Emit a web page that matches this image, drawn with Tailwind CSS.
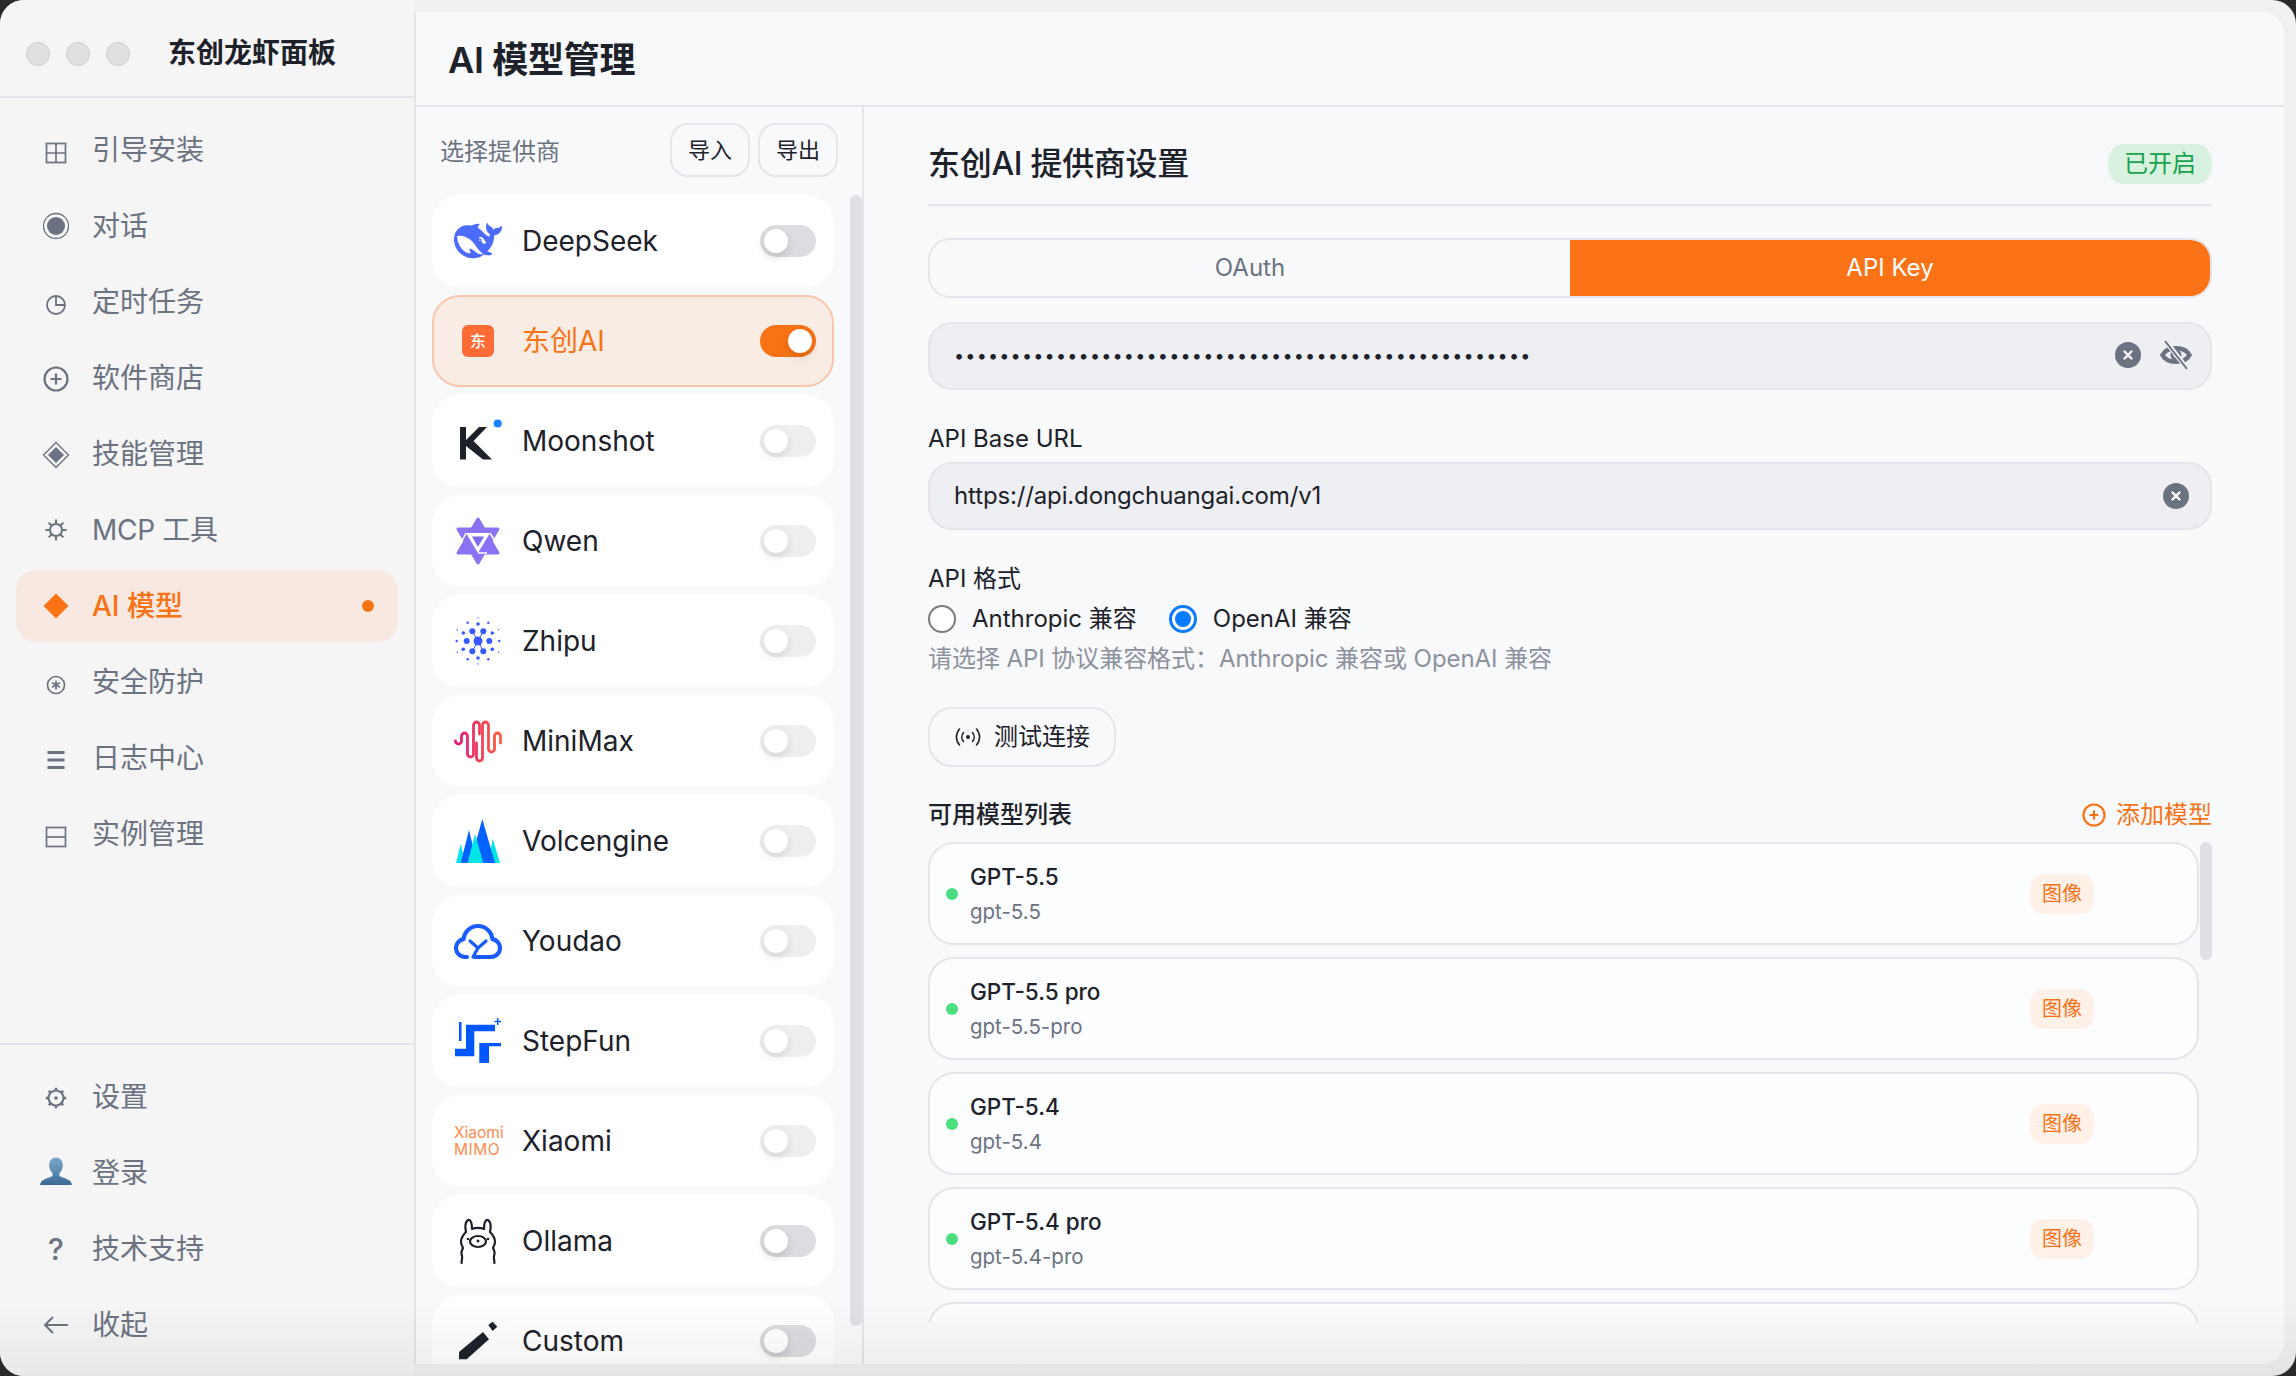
<!DOCTYPE html>
<html lang="zh-CN">
<head>
    <meta charset="UTF-8">
    <title>东创龙虾面板</title>
    <script src="https://cdn.jsdelivr.net/npm/@tailwindcss/browser@4"></script>
</head>
<body class="bg-[#2a2a2a] overflow-hidden font-['Inter','Noto_Sans_CJK_SC',sans-serif] text-[#1d2129]">
<div class="relative w-[2296px] h-[1376px] rounded-[24px] overflow-hidden bg-[#f0f0f1] flex">

    <!-- sidebar -->
    <aside class="w-[414px] h-full bg-[#f5f5f6] flex flex-col text-[28px] text-[#6b7280]">
        <div class="h-[98px] shrink-0 border-b-2 border-[#e4e4ea] flex items-center pl-[26px] pt-[12px]">
            <span class="w-6 h-6 rounded-full bg-[#e0e0e0] border border-[#cccccc]"></span>
            <span class="w-6 h-6 rounded-full bg-[#e0e0e0] border border-[#cccccc] ml-4"></span>
            <span class="w-6 h-6 rounded-full bg-[#e0e0e0] border border-[#cccccc] ml-4"></span>
            <span class="ml-[38px] text-[28px] font-semibold leading-8 text-[#1d2129] -mt-[2px]">东创龙虾面板</span>
        </div>
        <nav class="flex-1 pt-4 px-4 flex flex-col gap-1">
            <a class="h-[72px] rounded-[20px] flex items-center pl-6 gap-[20px]">
                <svg class="w-8 h-8 mt-[6px]" viewBox="0 0 32 32" fill="none" stroke="#6b7280" stroke-width="1.7"><rect x="6.500" y="6.500" width="19" height="19"/><path d="M16 6.500v19M6.500 16h19"/></svg>
                <span>引导安装</span>
            </a>
            <a class="h-[72px] rounded-[20px] flex items-center pl-6 gap-[20px]">
                <svg class="w-8 h-8" viewBox="0 0 32 32" fill="#6b7280" stroke="none"><circle cx="16" cy="16" r="12.500" fill="none" stroke="#6b7280" stroke-width="1.300"/><circle cx="16" cy="16" r="9"/></svg>
                <span>对话</span>
            </a>
            <a class="h-[72px] rounded-[20px] flex items-center pl-6 gap-[20px]">
                <svg class="w-8 h-8 mt-[6px]" viewBox="0 0 32 32" fill="none" stroke="#6b7280" stroke-width="1.800"><circle cx="16" cy="16" r="9"/><path d="M16 7v9h9"/></svg>
                <span>定时任务</span>
            </a>
            <a class="h-[72px] rounded-[20px] flex items-center pl-6 gap-[20px]">
                <svg class="w-8 h-8 mt-[2px]" viewBox="0 0 32 32" fill="none" stroke="#6b7280" stroke-width="2.200"><circle cx="16" cy="16" r="11.500"/><path d="M16 10.500v11M10.500 16h11"/></svg>
                <span>软件商店</span>
            </a>
            <a class="h-[72px] rounded-[20px] flex items-center pl-6 gap-[20px]">
                <svg class="w-8 h-8 mt-[2px]" viewBox="0 0 32 32"><path d="M16 3.500 28.500 16 16 28.500 3.500 16Z" fill="none" stroke="#6b7280" stroke-width="1.300"/><path d="M16 8 24 16 16 24 8 16Z" fill="#6b7280"/></svg>
                <span>技能管理</span>
            </a>
            <a class="h-[72px] rounded-[20px] flex items-center pl-6 gap-[20px]">
                <svg class="w-8 h-8" viewBox="0 0 32 32" fill="none" stroke="#6b7280" stroke-width="2"><circle cx="16" cy="16" r="6"/><path d="M16 5.500v4.500M16 22v4.500M5.500 16H10M22 16h4.500M8.600 8.600l3.200 3.200M20.200 20.200l3.200 3.200M23.400 8.600l-3.200 3.200M11.800 20.200l-3.200 3.200"/></svg>
                <span class="tracking-[-0.3px]">MCP 工具</span>
            </a>
            <a class="h-[72px] rounded-[20px] flex items-center pl-6 gap-[20px] bg-[#f7e9e2] text-[#f97316] font-medium">
                <svg class="w-8 h-8" viewBox="0 0 32 32" fill="#f97316"><path d="M16 3.500 28.500 16 16 28.500 3.500 16Z"/></svg>
                <span class="flex-1">AI 模型</span>
                <span class="w-3 h-3 rounded-full bg-[#f97316] mr-6"></span>
            </a>
            <a class="h-[72px] rounded-[20px] flex items-center pl-6 gap-[20px]">
                <svg class="w-8 h-8 mt-[6px]" viewBox="0 0 32 32" fill="none" stroke="#6b7280" stroke-width="1.700"><circle cx="16" cy="16" r="8.500"/><path d="M16 11.500v9M12.100 13.750l7.800 4.500M19.900 13.750l-7.800 4.500"/></svg>
                <span>安全防护</span>
            </a>
            <a class="h-[72px] rounded-[20px] flex items-center pl-6 gap-[20px]">
                <svg class="w-8 h-8 mt-[4px]" viewBox="0 0 32 32" fill="none" stroke="#6b7280" stroke-width="2.800"><path d="M7.500 8.500h17M7.500 16h17M7.500 23.500h17"/></svg>
                <span>日志中心</span>
            </a>
            <a class="h-[72px] rounded-[20px] flex items-center pl-6 gap-[20px]">
                <svg class="w-8 h-8 mt-[6px]" viewBox="0 0 32 32" fill="none" stroke="#6b7280" stroke-width="1.700"><rect x="6.500" y="6.500" width="19" height="19"/><path d="M6.500 16h19"/></svg>
                <span>实例管理</span>
            </a>
        </nav>
        <div class="shrink-0 border-t-2 border-[#e4e4ea] pt-4 pb-[15px] px-4 flex flex-col gap-1">
            <a class="h-[72px] rounded-[20px] flex items-center pl-6 gap-[20px]">
                <svg class="w-8 h-8 mt-[2px]" viewBox="0 0 32 32" fill="none" stroke="#6b7280"><circle cx="16" cy="16" r="7.500" stroke-width="2.200"/><circle cx="16" cy="16" r="1.800" fill="#6b7280" stroke="none"/><path stroke-width="2.600" d="M16 5.800v2.400M16 23.800v2.400M5.800 16h2.400M23.800 16h2.400M8.800 8.800l1.700 1.700M21.500 21.500l1.700 1.700M23.200 8.800l-1.700 1.700M10.500 21.500l-1.700 1.700"/></svg>
                <span>设置</span>
            </a>
            <a class="h-[72px] rounded-[20px] flex items-center pl-6 gap-[20px]">
                <svg class="w-8 h-8" viewBox="0 0 32 32"><defs><linearGradient id="personFill" x1="0" y1="0" x2="0" y2="1"><stop offset="0" stop-color="#7fa9cc"/><stop offset="1" stop-color="#3b6a96"/></linearGradient></defs><path d="M16 .5c4.200 0 6.800 3.400 6.800 7.700 0 3.200-1.300 6-3.300 7.600v2.700c0 1.300 6 2.500 9.700 4.700 1.700 1 2.500 2.600 2.600 4.800H.200c.1-2.200.9-3.800 2.600-4.800 3.700-2.200 9.700-3.400 9.700-4.700v-2.700c-2-1.600-3.300-4.400-3.300-7.600C9.200 3.900 11.800.5 16 .5Z" fill="url(#personFill)"/></svg>
                <span>登录</span>
            </a>
            <a class="h-[72px] rounded-[20px] flex items-center pl-6 gap-[20px]">
                <span class="w-8 text-center font-medium text-[30px] leading-8">?</span>
                <span>技术支持</span>
            </a>
            <a class="h-[72px] rounded-[20px] flex items-center pl-6 gap-[20px]">
                <svg class="w-8 h-8" viewBox="0 0 32 32" fill="none" stroke="#6b7280" stroke-width="2"><path d="M28 16H5M13 8l-8 8 8 8"/></svg>
                <span>收起</span>
            </a>
        </div>
    </aside>

    <!-- main panel -->
    <main class="flex-1 my-3 mr-3 flex flex-col bg-[#f8f9fb] border-l-2 border-[#e4e4ea] rounded-r-[22px] overflow-hidden">
        <header class="h-[95px] shrink-0 border-b-2 border-[#e4e4ea] flex items-center pl-8">
            <h1 class="text-[36px] font-semibold leading-10 tracking-[-0.3px] mt-[2px]">AI 模型管理</h1>
        </header>
        <div class="flex-1 flex min-h-0">

            <!-- provider column -->
            <section class="relative w-[448px] shrink-0 border-r-2 border-[#e4e4ea] flex flex-col">
                <div class="h-[88px] shrink-0 flex items-center pl-[24px] pr-[24px]">
                    <span class="flex-1 text-[24px] text-[#6b7280] mt-[2px]">选择提供商</span>
                    <button class="w-20 h-[54px] rounded-[18px] border-2 border-[#e4e4ea] text-[22px] mt-[-2px]">导入</button>
                    <button class="w-20 h-[54px] rounded-[18px] border-2 border-[#e4e4ea] text-[22px] ml-2 mt-[-2px]">导出</button>
                </div>
                <div class="flex-1 min-h-0 overflow-hidden pl-4 flex flex-col gap-2 text-[28px]">

                    <div class="w-[402px] h-[92px] shrink-0 rounded-[28px] bg-white flex items-center pl-[22px] pr-[18px]">
                        <svg class="w-12 h-12 shrink-0" viewBox="0 0 24 24" fill="#4d6bfe"><path d="M23.748 4.482c-.254-.124-.364.113-.512.234-.051.039-.094.09-.137.136-.372.397-.806.657-1.373.626-.829-.046-1.537.214-2.163.848-.133-.782-.575-1.248-1.247-1.548-.352-.156-.708-.311-.955-.65-.172-.241-.219-.51-.305-.774-.055-.16-.11-.323-.293-.35-.2-.031-.278.136-.356.276-.313.572-.434 1.202-.422 1.84.027 1.436.633 2.58 1.838 3.393.137.093.172.187.129.323-.082.28-.18.552-.266.833-.055.179-.137.217-.329.14a5.526 5.526 0 01-1.736-1.18c-.857-.828-1.631-1.742-2.597-2.458a11.365 11.365 0 00-.689-.471c-.985-.957.13-1.743.388-1.836.27-.098.093-.432-.779-.428-.872.004-1.67.295-2.687.684a3.055 3.055 0 01-.465.137 9.597 9.597 0 00-2.883-.102c-1.885.21-3.39 1.102-4.497 2.623C.082 8.606-.231 10.684.152 12.85c.403 2.284 1.569 4.175 3.36 5.653 1.858 1.533 3.997 2.284 6.438 2.14 1.482-.085 3.133-.284 4.994-1.86.47.234.962.327 1.78.397.63.059 1.236-.03 1.705-.128.735-.156.684-.837.419-.961-2.155-1.004-1.682-.595-2.113-.926 1.096-1.296 2.746-2.642 3.392-7.003.05-.347.007-.565 0-.845-.004-.17.035-.237.23-.256a4.173 4.173 0 001.545-.475c1.396-.763 1.96-2.015 2.093-3.517.02-.23-.004-.467-.247-.588zM11.581 18c-2.089-1.642-3.102-2.183-3.52-2.16-.392.024-.321.471-.235.763.09.288.207.486.371.739.114.167.192.416-.113.603-.673.416-1.842-.14-1.897-.167-1.361-.802-2.5-1.86-3.301-3.307-.774-1.393-1.224-2.887-1.298-4.482-.02-.386.093-.522.477-.592a4.696 4.696 0 011.529-.039c2.132.312 3.946 1.265 5.468 2.774.868.86 1.525 1.887 2.202 2.891.72 1.066 1.494 2.082 2.48 2.914.348.292.625.514.891.677-.802.09-2.14.11-3.054-.614zm1-6.44a.306.306 0 01.415-.287.302.302 0 01.2.288.306.306 0 01-.31.307.303.303 0 01-.304-.308zm3.11 1.596c-.2.081-.399.151-.59.16a1.245 1.245 0 01-.798-.254c-.274-.23-.47-.358-.552-.758a1.73 1.73 0 01.016-.588c.07-.327-.008-.537-.239-.727-.187-.156-.426-.199-.688-.199a.559.559 0 01-.254-.078c-.11-.054-.2-.19-.114-.358.028-.054.16-.186.192-.21.356-.202.767-.136 1.146.016.352.144.618.408 1.001.782.391.451.462.576.685.914.176.265.336.537.445.848.067.195-.019.354-.25.452z"/></svg>
                        <span class="flex-1 ml-[20px]">DeepSeek</span>
                        <span class="relative w-14 h-8 rounded-full bg-[#dcdde1]"><span class="absolute left-1 top-1 w-6 h-6 rounded-full bg-white shadow-[0_4px_10px_rgba(0,0,0,0.14)]"></span></span>
                    </div>

                    <div class="w-[402px] h-[92px] shrink-0 rounded-[28px] bg-[#f8ece5] border-2 border-[#fac5a9] flex items-center pl-[20px] pr-4">
                        <span class="w-12 h-12 shrink-0 flex items-center justify-center"><span class="w-8 h-8 rounded-[6px] bg-[#ff6b35] text-white text-[16px] font-medium flex items-center justify-center">东</span></span>
                        <span class="flex-1 ml-[20px] text-[#f97316]">东创AI</span>
                        <span class="relative w-14 h-8 rounded-full bg-[#f97316]"><span class="absolute right-1 top-1 w-6 h-6 rounded-full bg-white shadow-[0_4px_10px_rgba(0,0,0,0.14)]"></span></span>
                    </div>

                    <div class="w-[402px] h-[92px] shrink-0 rounded-[28px] bg-white flex items-center pl-[22px] pr-[18px]">
                        <svg class="w-12 h-12 shrink-0 overflow-visible" viewBox="0 0 48 48"><path d="M6 10h6v13L25 10h8L19.500 24 38 42.500H29L12 29v13.500H6Z" fill="#1d2129"/><circle cx="43.700" cy="6.500" r="4" fill="#1783ff"/></svg>
                        <span class="flex-1 ml-[20px]">Moonshot</span>
                        <span class="relative w-14 h-8 rounded-full bg-[#eeeef0]"><span class="absolute left-1 top-1 w-6 h-6 rounded-full bg-white shadow-[0_4px_10px_rgba(0,0,0,0.1)]"></span></span>
                    </div>

                    <div class="w-[402px] h-[92px] shrink-0 rounded-[28px] bg-white flex items-center pl-[22px] pr-[18px]">
                        <svg class="w-12 h-12 shrink-0" viewBox="0 0 48 48" fill="#8b72f5" stroke="#8b72f5" stroke-width="3" stroke-linejoin="round"><polygon points="24,2 44,36 4,36"/><polygon points="24,46 4,12 44,12"/><polygon points="12,16 36,16 24,36" fill="#fff" stroke="none"/><polygon points="18,19.500 30,19.500 24,30" fill="#7c6bf0" stroke="none"/><path d="M36 16 41 24M12 16 8 24M24 36H33" fill="none" stroke="#fff" stroke-width="1.500"/></svg>
                        <span class="flex-1 ml-[20px]">Qwen</span>
                        <span class="relative w-14 h-8 rounded-full bg-[#eeeef0]"><span class="absolute left-1 top-1 w-6 h-6 rounded-full bg-white shadow-[0_4px_10px_rgba(0,0,0,0.1)]"></span></span>
                    </div>

                    <div class="w-[402px] h-[92px] shrink-0 rounded-[28px] bg-white flex items-center pl-[22px] pr-[18px]">
                        <svg class="w-12 h-12 shrink-0" viewBox="-24 -24 48 48" fill="#3859ff"><path d="M0 0-5.700-9.700M0 0 5.300-9.700M0 0-5.700 10.300M0 0 5.300 10.300" stroke="#3859ff" stroke-width="1"/><circle r="4.500"/><circle cx="-5.700" cy="-9.700" r="3"/><circle cx="5.300" cy="-9.700" r="3"/><circle cx="-11.300" r="3"/><circle cx="11.300" r="3"/><circle cx="-5.700" cy="10.300" r="3"/><circle cx="5.300" cy="10.300" r="3"/><circle cy="-17" r="1.800"/><circle cx="-14.700" cy="-8" r="1.800"/><circle cx="14.300" cy="-8" r="1.800"/><circle cx="-14.700" cy="8.300" r="1.800"/><circle cx="14.300" cy="8.300" r="1.800"/><circle cy="17" r="1.800"/><circle cx="-10.300" cy="-18.300" r="1.200"/><circle cx="10.300" cy="-18.300" r="1.200"/><circle cx="-21.300" r="1.200"/><circle cx="21.300" r="1.200"/><circle cx="-10.300" cy="18.300" r="1.200"/><circle cx="10.300" cy="18.300" r="1.200"/><circle cy="-23" r=".7"/><circle cy="23" r=".7"/><circle cx="-20.700" cy="-11.300" r=".7"/><circle cx="20.700" cy="-11.300" r=".7"/><circle cx="-20.700" cy="11.300" r=".7"/><circle cx="20.700" cy="11.300" r=".7"/></svg>
                        <span class="flex-1 ml-[20px]">Zhipu</span>
                        <span class="relative w-14 h-8 rounded-full bg-[#eeeef0]"><span class="absolute left-1 top-1 w-6 h-6 rounded-full bg-white shadow-[0_4px_10px_rgba(0,0,0,0.1)]"></span></span>
                    </div>

                    <div class="w-[402px] h-[92px] shrink-0 rounded-[28px] bg-white flex items-center pl-[22px] pr-[18px]">
                        <svg class="w-12 h-12 shrink-0" viewBox="0 0 48 48" fill="none" stroke="url(#miniGrad)" stroke-width="2.800" stroke-linecap="round"><defs><linearGradient id="miniGrad" gradientUnits="userSpaceOnUse" x1="0" y1="0" x2="48" y2="0"><stop offset="0" stop-color="#e2167e"/><stop offset="1" stop-color="#fe603c"/></linearGradient></defs><path d="M1.500 24a3 3 0 0 0 6 0v-5a3 3 0 0 1 6 0v18a3 3 0 0 0 6 0V8a3 3 0 0 1 6 0v9M22.500 26v15a3 3 0 0 0 6 0V12M28.500 12V8a3 3 0 0 1 6 0v24a3 3 0 0 0 6 0V19a3 3 0 0 1 6 0v7"/></svg>
                        <span class="flex-1 ml-[20px]">MiniMax</span>
                        <span class="relative w-14 h-8 rounded-full bg-[#eeeef0]"><span class="absolute left-1 top-1 w-6 h-6 rounded-full bg-white shadow-[0_4px_10px_rgba(0,0,0,0.1)]"></span></span>
                    </div>

                    <div class="w-[402px] h-[92px] shrink-0 rounded-[28px] bg-white flex items-center pl-[22px] pr-[18px]">
                        <svg class="w-12 h-12 shrink-0" viewBox="-2 -2 48 48"><polygon points="4.700,25 0,44 9,44" fill="#00e5e5"/><polygon points="36.700,20 32,44 44,44" fill="#00e5e5"/><polygon points="13,11 4.700,44 21,44" fill="#0063ff"/><polygon points="26.300,0 14,44 39,44" fill="#0063ff"/><polygon points="19,15 11.700,44 27.300,44" fill="#00e5e5"/></svg>
                        <span class="flex-1 ml-[20px]">Volcengine</span>
                        <span class="relative w-14 h-8 rounded-full bg-[#eeeef0]"><span class="absolute left-1 top-1 w-6 h-6 rounded-full bg-white shadow-[0_4px_10px_rgba(0,0,0,0.1)]"></span></span>
                    </div>

                    <div class="w-[402px] h-[92px] shrink-0 rounded-[28px] bg-white flex items-center pl-[22px] pr-[18px]">
                        <svg class="w-12 h-12 shrink-0" viewBox="0 0 48 48" fill="none" stroke="#1a5cff" stroke-width="4.200" stroke-linecap="round" stroke-linejoin="round"><path d="M13 40H11C5.500 40 2 35.500 2 31c0-4.700 3.400-8.300 7.500-8.800C10.500 14.500 16.500 9 24 9s13.500 5.500 14.500 13.200C42.600 22.700 46 26.300 46 31c0 4.500-3.500 9-9 9H21"/><path stroke-width="3.200" d="M16 24l8 7 8-7M24 31l-5 9"/></svg>
                        <span class="flex-1 ml-[20px]">Youdao</span>
                        <span class="relative w-14 h-8 rounded-full bg-[#eeeef0]"><span class="absolute left-1 top-1 w-6 h-6 rounded-full bg-white shadow-[0_4px_10px_rgba(0,0,0,0.1)]"></span></span>
                    </div>

                    <div class="w-[402px] h-[92px] shrink-0 rounded-[28px] bg-white flex items-center pl-[22px] pr-[18px]">
                        <svg class="w-12 h-12 shrink-0" viewBox="-1 -1 48 48" fill="#0057ff"><rect x="4" y="4" width="2.500" height="19"/><polygon points="11,6.700 40,6.700 40,13.300 19.300,13.300 19.300,38.300 0,38.300 0,30.700 11,30.700"/><polygon points="24.300,25 46,25 46,28.300 34,28.300 34,45 24.300,45"/><path d="M42.700 0v7M39.500 3.500h6.500" stroke="#0057ff" stroke-width="1.500"/></svg>
                        <span class="flex-1 ml-[20px]">StepFun</span>
                        <span class="relative w-14 h-8 rounded-full bg-[#eeeef0]"><span class="absolute left-1 top-1 w-6 h-6 rounded-full bg-white shadow-[0_4px_10px_rgba(0,0,0,0.1)]"></span></span>
                    </div>

                    <div class="w-[402px] h-[92px] shrink-0 rounded-[28px] bg-white flex items-center pl-[22px] pr-[18px]">
                        <span class="w-12 shrink-0 flex flex-col text-[15.500px] leading-[17px] text-[#ff8a4c] whitespace-nowrap"><span>Xiaomi</span><span class="tracking-[0.5px]">MIMO</span></span>
                        <span class="flex-1 ml-[20px]">Xiaomi</span>
                        <span class="relative w-14 h-8 rounded-full bg-[#eeeef0]"><span class="absolute left-1 top-1 w-6 h-6 rounded-full bg-white shadow-[0_4px_10px_rgba(0,0,0,0.1)]"></span></span>
                    </div>

                    <div class="w-[402px] h-[92px] shrink-0 rounded-[28px] bg-white flex items-center pl-[22px] pr-[18px]">
                        <svg class="w-12 h-12 shrink-0" viewBox="0 0 48 48" fill="none" stroke="#1d2129" stroke-width="2.200" stroke-linecap="round" stroke-linejoin="round"><path d="M12 15C11 10 11 5 14 3 17 2 18 7 18 12 21 10.500 27 10.500 30 12 30 7 31 2 34 3 37 5 37 10 36 15 39 18 41 21 41 25 41 28 39.500 29.500 39 31 40 33 41 35 40.500 37 40 39 39.500 40 40 42L40.500 46"/><path d="M12 15C9 18 7 21 7 25 7 28 8.500 29.500 9 31 8 33 7 35 7.500 37 8 39 8.500 40 8 42L7.500 46"/><ellipse cx="24" cy="24.500" rx="8" ry="5.500"/><circle cx="14" cy="22" r="1.300" fill="#1d2129" stroke="none"/><circle cx="34" cy="22" r="1.300" fill="#1d2129" stroke="none"/><circle cx="24" cy="24" r="1.500" fill="#1d2129" stroke="none"/></svg>
                        <span class="flex-1 ml-[20px]">Ollama</span>
                        <span class="relative w-14 h-8 rounded-full bg-[#dcdde1]"><span class="absolute left-1 top-1 w-6 h-6 rounded-full bg-white shadow-[0_4px_10px_rgba(0,0,0,0.14)]"></span></span>
                    </div>

                    <div class="w-[402px] h-[92px] shrink-0 rounded-[28px] bg-white flex items-center pl-[22px] pr-[18px]">
                        <svg class="w-12 h-12 shrink-0" viewBox="0 0 48 48" fill="#1d2129"><polygon points="5,35 29,15 35,22.300 12.700,42.300 5,42.300"/><polygon points="34.300,8 38.700,4.700 43.300,9.700 38.700,14"/></svg>
                        <span class="flex-1 ml-[20px]">Custom</span>
                        <span class="relative w-14 h-8 rounded-full bg-[#dcdde1]"><span class="absolute left-1 top-1 w-6 h-6 rounded-full bg-white shadow-[0_4px_10px_rgba(0,0,0,0.14)]"></span></span>
                    </div>
                </div>
                <span class="absolute right-0 top-[88px] w-3 h-[1131px] rounded-full bg-[#dfe0e5]"></span>
            </section>

            <!-- settings column -->
            <section class="flex-1 min-w-0 pl-[64px] pr-[72px] flex flex-col">
                <div class="h-[99px] shrink-0 pt-4 border-b-2 border-[#e4e4ea] flex items-center justify-between">
                    <h2 class="text-[32px] font-medium leading-10 tracking-[-0.3px]">东创AI 提供商设置</h2>
                    <span class="w-[104px] h-10 rounded-2xl bg-[#d9f2e0] text-[#16a34a] text-[24px] flex items-center justify-center">已开启</span>
                </div>

                <div class="mt-8 h-[60px] shrink-0 rounded-[22px] border-2 border-[#e4e4ea] flex overflow-hidden text-[24px]">
                    <button class="flex-1 text-[#6b7280]">OAuth</button>
                    <button class="flex-1 bg-[#fb7316] text-white">API Key</button>
                </div>

                <div class="mt-6 h-[68px] shrink-0 rounded-[24px] border-2 border-[#e4e4ea] bg-[#eeeff2] flex items-center pl-[24px] pr-[18px]">
                    <span class="flex-1 text-[18px] tracking-[1.2px] leading-none">•••••••••••••••••••••••••••••••••••••••••••••••••••</span>
                    <svg class="w-7 h-7 -mt-[2px]" viewBox="0 0 28 28"><circle cx="14" cy="14" r="13" fill="#6b7280"/><path d="M10.500 10.500l7 7M17.500 10.500l-7 7" stroke="#fff" stroke-width="2.400" stroke-linecap="round"/></svg>
                    <svg class="w-8 h-8 ml-[18px] -mt-[2px]" viewBox="0 0 32 32" fill="none" stroke="#6b7280"><path d="M2.500 16C7 7 25 7 29.500 16 25 25 7 25 2.500 16Z" stroke-width="4.500"/><circle cx="16" cy="16" r="4" stroke-width="3"/><path d="M6 2.500 27 29.500" stroke="#eeeff2" stroke-width="5"/><path d="M5 2 27 30" stroke-width="2"/></svg>
                </div>

                <label class="mt-[33px] h-8 shrink-0 text-[24px] leading-8">API Base URL</label>
                <div class="mt-[7px] h-[68px] shrink-0 rounded-[24px] border-2 border-[#e4e4ea] bg-[#eeeff2] flex items-center pl-[24px] pr-[20px] text-[24px]">
                    <span class="flex-1 tracking-[-0.14px]">https://api.dongchuangai.com/v1</span>
                    <svg class="w-7 h-7" viewBox="0 0 28 28"><circle cx="14" cy="14" r="13" fill="#6b7280"/><path d="M10.500 10.500l7 7M17.500 10.500l-7 7" stroke="#fff" stroke-width="2.400" stroke-linecap="round"/></svg>
                </div>

                <label class="mt-[33px] h-8 shrink-0 text-[24px] leading-8">API 格式</label>
                <div class="mt-2 h-8 shrink-0 flex items-center text-[24px]">
                    <span class="w-7 h-7 rounded-full bg-white border-2 border-[#7b7b7b]"></span>
                    <span class="ml-[16px]">Anthropic 兼容</span>
                    <span class="ml-8 w-7 h-7 rounded-full bg-white border-[3px] border-[#0a7aff] flex items-center justify-center"><span class="w-4 h-4 rounded-full bg-[#0a7aff]"></span></span>
                    <span class="ml-[16px]">OpenAI 兼容</span>
                </div>
                <p class="mt-2 h-8 shrink-0 text-[24px] leading-8 tracking-[-0.06px] text-[#8c919b]">请选择 API 协议兼容格式：Anthropic 兼容或 OpenAI 兼容</p>

                <button class="mt-8 w-[188px] h-[60px] shrink-0 rounded-[24px] border-2 border-[#e4e4ea] flex items-center pl-[24px] gap-[12px] text-[24px]">
                    <svg class="w-7 h-7" viewBox="0 0 28 28" fill="none" stroke="#1d2129" stroke-width="1.600" stroke-linecap="round"><circle cx="14" cy="14" r="2" fill="#1d2129" stroke="none"/><path d="M9.500 9.500a7 7 0 0 0 0 9M18.500 9.500a7 7 0 0 1 0 9M5.500 6a12 12 0 0 0 0 16M22.500 6a12 12 0 0 1 0 16"/></svg>
                    <span>测试连接</span>
                </button>

                <div class="mt-8 h-8 shrink-0 flex items-center justify-between text-[24px]">
                    <span class="font-medium">可用模型列表</span>
                    <span class="flex items-center gap-[10px] text-[#f97316]">
                        <svg class="w-6 h-6" viewBox="0 0 24 24" fill="none" stroke="#f97316" stroke-width="2.200"><circle cx="12" cy="12" r="10.500"/><path d="M12 7.500v9M7.500 12h9"/></svg>
                        <span>添加模型</span>
                    </span>
                </div>

                <div class="relative mt-[11px] h-[480px] shrink-0 overflow-hidden pr-[13px] flex flex-col gap-3">
                    <div class="h-[103px] shrink-0 rounded-[26px] border-2 border-[#e4e4ea] bg-[#fcfdfe] flex items-center pl-4 pr-[103px]">
                        <span class="w-3 h-3 rounded-full bg-[#4ade80]"></span>
                        <div class="flex-1 ml-3">
                            <div class="text-[22.500px] font-medium leading-[30px]">GPT-5.5</div>
                            <div class="mt-1.5 text-[20.500px] leading-7 text-[#6b7280]">gpt-5.5</div>
                        </div>
                        <span class="w-16 h-10 rounded-[14px] bg-[#fff0e8] text-[#f97316] text-[20px] flex items-center justify-center">图像</span>
                    </div>
                    <div class="h-[103px] shrink-0 rounded-[26px] border-2 border-[#e4e4ea] bg-[#fcfdfe] flex items-center pl-4 pr-[103px]">
                        <span class="w-3 h-3 rounded-full bg-[#4ade80]"></span>
                        <div class="flex-1 ml-3">
                            <div class="text-[22.500px] font-medium leading-[30px]">GPT-5.5 pro</div>
                            <div class="mt-1.5 text-[20.500px] leading-7 text-[#6b7280]">gpt-5.5-pro</div>
                        </div>
                        <span class="w-16 h-10 rounded-[14px] bg-[#fff0e8] text-[#f97316] text-[20px] flex items-center justify-center">图像</span>
                    </div>
                    <div class="h-[103px] shrink-0 rounded-[26px] border-2 border-[#e4e4ea] bg-[#fcfdfe] flex items-center pl-4 pr-[103px]">
                        <span class="w-3 h-3 rounded-full bg-[#4ade80]"></span>
                        <div class="flex-1 ml-3">
                            <div class="text-[22.500px] font-medium leading-[30px]">GPT-5.4</div>
                            <div class="mt-1.5 text-[20.500px] leading-7 text-[#6b7280]">gpt-5.4</div>
                        </div>
                        <span class="w-16 h-10 rounded-[14px] bg-[#fff0e8] text-[#f97316] text-[20px] flex items-center justify-center">图像</span>
                    </div>
                    <div class="h-[103px] shrink-0 rounded-[26px] border-2 border-[#e4e4ea] bg-[#fcfdfe] flex items-center pl-4 pr-[103px]">
                        <span class="w-3 h-3 rounded-full bg-[#4ade80]"></span>
                        <div class="flex-1 ml-3">
                            <div class="text-[22.500px] font-medium leading-[30px]">GPT-5.4 pro</div>
                            <div class="mt-1.5 text-[20.500px] leading-7 text-[#6b7280]">gpt-5.4-pro</div>
                        </div>
                        <span class="w-16 h-10 rounded-[14px] bg-[#fff0e8] text-[#f97316] text-[20px] flex items-center justify-center">图像</span>
                    </div>
                    <div class="h-[103px] shrink-0 rounded-[26px] border-2 border-[#e4e4ea] bg-[#fcfdfe]"></div>
                    <span class="absolute right-0 top-0 w-3 h-[118px] rounded-full bg-[#dfe0e5]"></span>
                </div>
            </section>
        </div>
    </main>

    <!-- soft fade at the window's lower edge -->
    <div class="absolute inset-x-0 bottom-0 h-[76px] bg-gradient-to-b from-black/0 to-black/5 pointer-events-none"></div>
</div>
</body>
</html>
